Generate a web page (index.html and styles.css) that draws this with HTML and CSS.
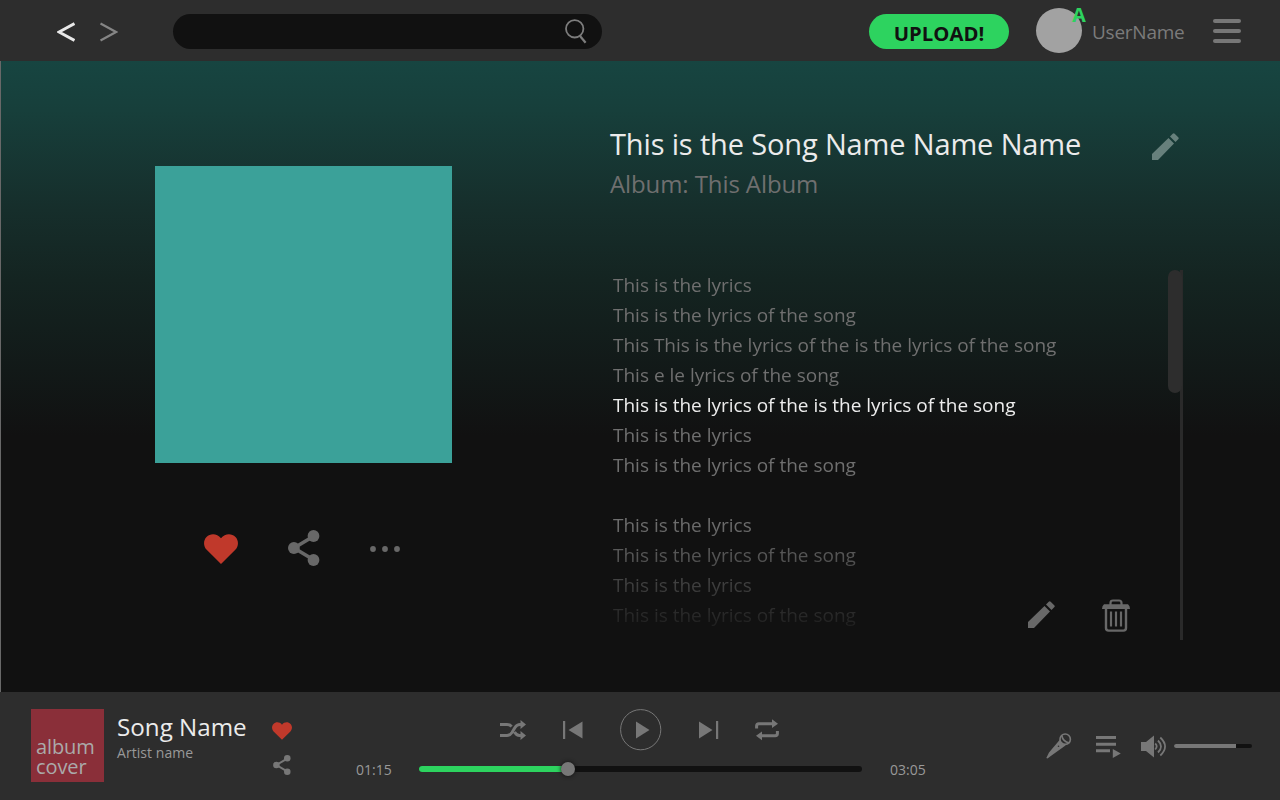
FILE: index.html
```html
<!DOCTYPE html>
<html lang="en">
<head>
<meta charset="utf-8">
<title>Song lyrics</title>
<link rel="stylesheet" href="styles.css">
</head>
<body>
<svg class="sprites" aria-hidden="true">
  <symbol id="heart" viewBox="0 0 34 30"><path d="M17 30 2.700 15.800C-.8 12.200-.8 6.300 2.500 2.900 6.500-1.100 13-.8 17 4.200 21-.8 27.500-1.100 31.500 2.900c3.300 3.400 3.300 9.300-.2 12.900z"/></symbol>
  <symbol id="share" viewBox="0 0 32 36"><path d="M26 6 6 18l20 12" fill="none" stroke="currentColor" stroke-width="3.600"/><circle cx="25.500" cy="6" r="5.900"/><circle cx="5.900" cy="18" r="5.900"/><circle cx="25.500" cy="30" r="5.900"/></symbol>
  <symbol id="pencil" viewBox="0 0 27 27"><path d="M0 27v-6L16.500 5l5.500 5.500L6 27zM18 3.500 20.700.8q1-1.100 2 0l3.500 3.500q1.100 1 0 2L23.500 9z"/></symbol>
</svg>
<div class="app">
  <header class="topbar">
    <nav class="history">
      <svg width="18" height="20" viewBox="0 0 18 20"><path d="M17.500 1.500 2 10l15.500 8.500" fill="none" stroke="#e8e8e8" stroke-width="3"/></svg>
      <svg width="18" height="20" viewBox="0 0 18 20"><path d="M.5 1.500 16 10 .5 18.500" fill="none" stroke="#858585" stroke-width="2.200"/></svg>
    </nav>
    <div class="search">
      <svg width="22" height="25" viewBox="0 0 22 25"><g fill="none" stroke="#7d7d7d" stroke-width="1.800"><circle cx="9.700" cy="9.800" r="8.700"/><path d="m14.800 16.800 5.800 7" stroke-width="2.200"/></g></svg>
    </div>
    <button class="upload"><span>UPLOAD!</span></button>
    <div class="avatar"><span class="badge">A</span></div>
    <span class="username">UserName</span>
    <div class="menu"><i></i><i></i><i></i></div>
  </header>

  <main class="stage">
    <section class="artwork">
      <div class="art"></div>
      <div class="actions">
        <svg class="red" width="34" height="30"><use href="#heart"/></svg>
        <svg width="32" height="36"><use href="#share"/></svg>
        <svg width="30" height="6" viewBox="0 0 30 6"><circle cx="3" cy="3" r="2.900"/><circle cx="15" cy="3" r="2.900"/><circle cx="27" cy="3" r="2.900"/></svg>
      </div>
    </section>
    <section class="details">
      <div class="heading">
        <div>
          <h1 class="title">This is the Song Name Name Name</h1>
          <p class="album">Album: This Album</p>
        </div>
        <svg class="edit-title" width="27" height="27"><use href="#pencil"/></svg>
      </div>
      <div class="lyrics">
        <div class="lines">
          <p>This is the lyrics</p>
          <p>This is the lyrics of the song</p>
          <p>This This is the lyrics of the is the lyrics of the song</p>
          <p>This e le lyrics of the song</p>
          <p class="current">This is the lyrics of the is the lyrics of the song</p>
          <p>This is the lyrics</p>
          <p>This is the lyrics of the song</p>
          <p></p>
          <p>This is the lyrics</p>
          <p>This is the lyrics of the song</p>
          <p>This is the lyrics</p>
          <p>This is the lyrics of the song</p>
        </div>
        <div class="tools">
          <svg class="edit-lyrics" width="27" height="27"><use href="#pencil"/></svg>
          <svg width="28" height="33" viewBox="0 0 28 33"><path d="M8.500 6V4q0-2.500 2.500-2.500h6q2.500 0 2.500 2.500v2" fill="none" stroke="currentColor" stroke-width="2.200"/><path d="M2 5.200h24q2 1.500 2 4.800H0Q0 6.700 2 5.200z"/><path d="M4 9v20q0 2.600 2.600 2.600h14.800q2.600 0 2.600-2.600V9" fill="none" stroke="currentColor" stroke-width="2.400"/><path d="M9 12.500v15M14 12.500v15M19 12.500v15" stroke="currentColor" stroke-width="2.200"/></svg>
        </div>
        <div class="scrollbar"><div class="thumb"></div></div>
      </div>
    </section>
  </main>

  <footer class="player">
    <div class="cover"><span>album<br>cover</span></div>
    <div class="track">
      <div class="song">Song Name</div>
      <div class="artist">Artist name</div>
    </div>
    <div class="track-actions">
      <svg class="red" width="20" height="18"><use href="#heart"/></svg>
      <svg width="18" height="20"><use href="#share"/></svg>
    </div>
    <div class="transport">
      <div class="controls">
        <svg width="26" height="20" viewBox="0 0 26 20"><path d="M0 4.500h7q3 0 4.500 2.200M0 15.500h7q3 0 5-3l3-5q2-3 5-3h1.500M14.500 12q2 3.500 5 3.500h2" fill="none" stroke="currentColor" stroke-width="3"/><path d="M20.500 0 26 4.500 20.500 9zM20.500 11l5.500 4.500-5.500 4.500z"/></svg>
        <svg width="20" height="18" viewBox="0 0 20 18"><path d="M0 0h2.200v18H0zM19.500.5v17L5.500 9z"/></svg>
        <svg width="42" height="42" viewBox="0 0 42 42"><circle cx="20.700" cy="20.700" r="20.100" fill="none" stroke="currentColor"/><path d="M16 12.500v17L29.500 21z"/></svg>
        <svg width="20" height="18" viewBox="0 0 20 18"><path d="M17 0h2.200v18H17zM0 .5v17L13.500 9z"/></svg>
        <svg class="repeat" width="24" height="22" viewBox="0 0 24 22"><path d="M1.600 9.500V7q0-2.300 2.300-2.300H17M22.400 12v2.500q0 2.300-2.300 2.300H6" fill="none" stroke="currentColor" stroke-width="3"/><path d="m17 .3 6 4.400-6 4.400zM7 12.400l-6 4.400 6 4.400z"/></svg>
      </div>
      <div class="timeline">
        <span class="time">01:15</span>
        <div class="progress"><div class="played"></div><div class="knob"></div></div>
        <span class="time">03:05</span>
      </div>
    </div>
    <div class="extras">
      <svg width="26" height="26" viewBox="0 0 26 26"><path d="M.3 25 3 19.500 14 6.500l5.500 6L5.500 22.500 1.500 25.600z"/><circle cx="19.200" cy="6.200" r="5.200" fill="#2d2d2d" stroke="currentColor" stroke-width="1.600"/><path d="M15.800 2.500q1 6 7.500 7.500" fill="none" stroke="currentColor" stroke-width="1.600"/><circle cx="12.500" cy="13.200" r=".8" fill="#2d2d2d"/></svg>
      <svg width="25" height="23" viewBox="0 0 25 23"><path d="M0 1h20v3H0zM0 7.700h20v3H0zM0 14.200h14v3H0zM16.800 14v9l8-4.500z"/></svg>
      <svg width="26" height="23" viewBox="0 0 26 23"><path d="M0 7h5l8-6.500v22L5 16H0z"/><path d="M14.200 8.500q3 2.700 0 6M17 5.500q6 6 0 12M19.300 2.500q9.500 9 0 18" fill="none" stroke="currentColor" stroke-width="1.800"/></svg>
      <div class="volume"><div class="level"></div></div>
    </div>
  </footer>
</div>
</body>
</html>
```

FILE: styles.css
```css
* { box-sizing: border-box; margin: 0; padding: 0; }

body {
  width: 1280px;
  height: 800px;
  overflow: hidden;
  background: #111;
  color: #6f6f6f;
  font-family: "Open Sans", "Noto Sans", sans-serif;
}

svg { display: block; flex: none; fill: currentColor; }
.sprites { position: absolute; width: 0; height: 0; }
.red { color: #c0392b; }
.app { display: grid; grid-template-rows: 61px 631px 108px; white-space: nowrap; }

.topbar { display: flex; align-items: flex-start; background: #2d2d2d; padding-left: 57px; }
.history { display: flex; gap: 25px; width: 116px; padding: 22px 0 0; }
.search {
  display: flex;
  justify-content: flex-end;
  width: 429px;
  height: 35px;
  margin-top: 14px;
  padding: 5px 15px 0 0;
  border-radius: 18px;
  background: #111;
}
.upload {
  width: 140px;
  height: 35px;
  margin: 14px 0 0 267px;
  border: 0;
  border-radius: 18px;
  background: #2dd35f;
  color: #111;
  font: 700 20.300px/39px "Open Sans", "Noto Sans", sans-serif;
}
.avatar {
  position: relative;
  width: 46px;
  height: 45px;
  margin: 8px 0 0 27px;
  border-radius: 50%;
  background: #a2a2a2;
}
.badge {
  position: absolute;
  left: 36px;
  top: -5px;
  color: #2dd35f;
  font-size: 20px;
  font-weight: 700;
  line-height: 24px;
}
.username { width: 121px; margin: 18px 0 0 10px; font-size: 19px; letter-spacing: -0.250px; line-height: 28px; color: #7b7b7b; }
.menu { display: grid; gap: 6px; padding-top: 19px; }
.menu i { width: 28px; height: 4px; border-radius: 2px; background: #777; }

.stage {
  display: grid;
  grid-template-columns: 609px 573px;
  border-left: 1px solid #686868;
  background: linear-gradient(#174541 0, #173f3b 49px, #162e2b 149px, #142421 219px, #121918 309px, #111 375px);
}
.artwork { padding: 105px 0 0 154px; }
.art { width: 297px; height: 297px; background: #3ba199; }
.actions { display: flex; align-items: center; gap: 50px; height: 36px; margin-top: 67px; padding-left: 49px; color: #686868; }
.actions .red { margin-top: 2px; }
.actions svg:last-child { margin: 2px 0 0 -0.500px; }

.details { display: grid; grid-template-rows: 209px 370px; }
.heading { display: flex; justify-content: space-between; }
.title { margin-top: 61px; color: #ebebeb; font-size: 29px; font-weight: 400; letter-spacing: -0.150px; line-height: 43px; }
.album { margin-top: 1px; font-size: 24px; letter-spacing: -0.100px; line-height: 36px; }
.edit-title { margin: 72px 4px 0 0; color: #67807c; }
.lyrics { position: relative; display: flex; justify-content: space-between; padding-left: 3px; }
.lines { font-size: 19px; line-height: 30px; -webkit-mask-image: linear-gradient(#000 250px, transparent 376px); mask-image: linear-gradient(#000 250px, transparent 376px); }
.lines p { height: 30px; }
.lines .current { color: #ededed; }
.tools { position: absolute; right: 53px; bottom: 8px; display: flex; align-items: center; gap: 47px; color: #686868; }
.edit-lyrics { margin-bottom: 2px; }
.scrollbar { width: 15px; border-right: 3px solid #2a2a2a; }
.thumb { width: 14px; height: 123px; border-radius: 7px; background: #2d2d2d; }

.player { display: flex; background: #2d2d2d; color: #777; }
.cover { width: 73px; height: 73px; margin: 17px 13px 0 31px; padding: 28px 0 0 5px; background: #8a2f39; color: #aaa; font-size: 20px; letter-spacing: -0.100px; line-height: 20px; }
.track { width: 155px; padding-top: 17px; }
.song { color: #ebebeb; font-size: 24.200px; line-height: 36px; }
.artist { color: #999; font-size: 14px; letter-spacing: 0.050px; line-height: 16px; }
.track-actions { display: flex; flex-direction: column; gap: 15px; width: 84px; padding-top: 30px; }
.track-actions svg:last-child { margin-left: 1px; }
.transport { width: 690px; padding-top: 17px; }
.controls { display: flex; align-items: center; height: 42px; gap: 37px; padding-left: 144px; }
.repeat { margin-left: -1px; }
.timeline { display: flex; align-items: center; height: 20px; margin-top: 8px; gap: 27px; }
.time { width: 36px; color: #999; font-size: 14px; }
.progress { position: relative; width: 443px; height: 6px; border-radius: 3px; background: #111; }
.progress + .time { margin-left: 1px; }
.played { width: 149px; height: 6px; border-radius: 3px; background: #2dd35f; }
.knob { position: absolute; left: 142px; top: -4px; width: 14px; height: 14px; border-radius: 50%; background: #777; box-shadow: 0 0 4px #111; }
.extras { display: flex; align-items: center; height: 26px; margin-top: 41px; }
.extras svg:nth-child(2) { margin-left: 24px; }
.extras svg:nth-child(3) { margin-left: 20px; }
.volume { width: 78px; height: 4px; margin-left: 7px; border-radius: 2px; background: #111; }
.level { width: 62px; height: 4px; border-radius: 2px 0 0 2px; background: #777; }
```
